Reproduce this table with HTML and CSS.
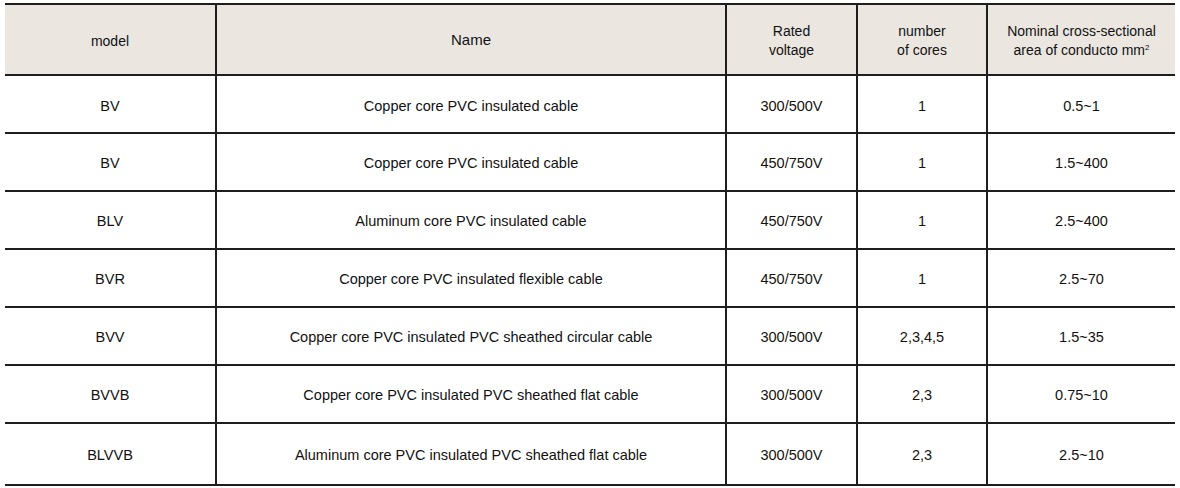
FILE: index.html
```html
<!DOCTYPE html>
<html>
<head>
<meta charset="utf-8">
<link rel="stylesheet" href="styles.css">
</head>
<body>
<div class="wrap">
<table class="spec">
<colgroup>
<col class="c1"><col class="c2"><col class="c3"><col class="c4"><col class="c5">
</colgroup>
<thead>
<tr class="head">
<th>model</th>
<th class="name-h">Name</th>
<th>Rated<br>voltage</th>
<th>number<br>of cores</th>
<th>Nominal cross-sectional<br>area of conducto mm<sup>2</sup></th>
</tr>
</thead>
<tbody>
<tr class="first"><td>BV</td><td>Copper core PVC insulated cable</td><td>300/500V</td><td>1</td><td>0.5~1</td></tr>
<tr><td>BV</td><td>Copper core PVC insulated cable</td><td>450/750V</td><td>1</td><td>1.5~400</td></tr>
<tr><td>BLV</td><td>Aluminum core PVC insulated cable</td><td>450/750V</td><td>1</td><td>2.5~400</td></tr>
<tr><td>BVR</td><td>Copper core PVC insulated flexible cable</td><td>450/750V</td><td>1</td><td>2.5~70</td></tr>
<tr><td>BVV</td><td>Copper core PVC insulated PVC sheathed circular cable</td><td>300/500V</td><td>2,3,4,5</td><td>1.5~35</td></tr>
<tr><td>BVVB</td><td>Copper core PVC insulated PVC sheathed flat cable</td><td>300/500V</td><td>2,3</td><td>0.75~10</td></tr>
<tr class="last"><td>BLVVB</td><td>Aluminum core PVC insulated PVC sheathed flat cable</td><td>300/500V</td><td>2,3</td><td>2.5~10</td></tr>
</tbody>
</table>
</div>
</body>
</html>
```
FILE: styles.css
```css
html, body {
  margin: 0;
  padding: 0;
  background: #ffffff;
}
.wrap {
  padding: 3px 5px 0 5px;
}
.spec {
  width: 1170px;
  table-layout: fixed;
  border-collapse: collapse;
  font-family: "Liberation Sans", Arial, sans-serif;
  font-size: 14.5px;
  color: #121212;
}
.c1 { width: 211px; }
.c2 { width: 510px; }
.c3 { width: 131px; }
.c4 { width: 130px; }
.c5 { width: 188px; }
.spec th, .spec td {
  text-align: center;
  vertical-align: middle;
  border-top: 2px solid #1e1e1e;
  border-bottom: 2px solid #1e1e1e;
  border-left: 2px solid #1e1e1e;
  padding: 0 4px;
  line-height: 19px;
}
.spec th:first-child, .spec td:first-child {
  border-left: none;
}
.head th {
  background: #ebe6e0;
  font-weight: normal;
  font-size: 14px;
  height: 66px;
  padding-top: 3px;
}
.head .name-h {
  font-size: 15px;
  padding-top: 0;
}
.spec sup {
  font-size: 8px;
  line-height: 0;
  vertical-align: 5px;
}
.spec td {
  height: 53px;
  padding-top: 3px;
}
.spec tr.first td {
  height: 51px;
  padding-top: 5px;
}
.spec tr.last td {
  height: 57px;
}
```
